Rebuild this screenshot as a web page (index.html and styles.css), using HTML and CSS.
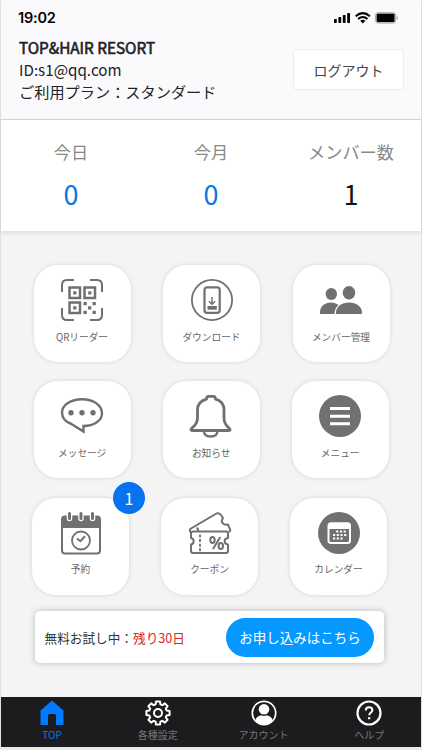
FILE: index.html
```html
<!DOCTYPE html>
<html lang="ja">
<head>
  <meta charset="UTF-8">
  <meta name="viewport" content="width=device-width, initial-scale=1.0">
  <title>TOP</title>
  <link rel="stylesheet" href="styles.css">
</head>
<body>
  <div class="app">
    <header class="header">
      <div class="status-bar">
        <span class="time">19:02</span>
        <svg class="status-icons" width="64" height="12" viewBox="0 0 64 12">
          <g fill="#000">
            <rect x="0" y="7" width="2.8" height="4" rx=".7"/>
            <rect x="4.4" y="5" width="2.8" height="6" rx=".7"/>
            <rect x="8.8" y="3" width="2.8" height="8" rx=".7"/>
            <rect x="13.2" y="1" width="2.8" height="10" rx=".7"/>
          </g>
          <g fill="none" stroke="#000" stroke-width="2.1">
            <path d="M21.7 4.2Q28.8 -2 35.9 4.2"/>
            <path d="M24.1 7Q28.8 3 33.5 7"/>
          </g>
          <path d="M26.2 8.7Q28.8 6.7 31.4 8.7L28.8 11.5z"/>
          <rect x="41.5" y=".7" width="20.2" height="10.4" rx="2.6" fill="#ccc" stroke="#aaa"/>
          <rect x="42.7" y="1.7" width="17.8" height="8.4" rx="1.3"/>
          <path d="M62.7 4v4q1.3-.6 1.3-2t-1.3-2" fill="#aaa"/>
        </svg>
      </div>
      <div class="account">
        <div class="account-info">
          <h1 class="shop-name">TOP&amp;HAIR RESORT</h1>
          <p class="shop-id">ID:s1@qq.com</p>
          <p class="plan">ご利用プラン：スタンダード</p>
        </div>
        <button class="logout">ログアウト</button>
      </div>
    </header>

    <section class="stats">
      <div class="stat">
        <span class="stat-label">今日</span>
        <span class="stat-value">0</span>
      </div>
      <div class="stat">
        <span class="stat-label">今月</span>
        <span class="stat-value">0</span>
      </div>
      <div class="stat">
        <span class="stat-label">メンバー数</span>
        <span class="stat-value dark">1</span>
      </div>
    </section>

    <main class="menu">
      <div class="menu-row row-first">
        <div class="tile">
          <svg class="icon" viewBox="0 0 42 42">
            <g fill="none" stroke="#707070" stroke-width="2">
              <path d="M1 13V6q0-5 5-5h7M29 1h7q5 0 5 5v7M41 29v7q0 5-5 5h-7M13 41H6q-5 0-5-5v-7"/>
              <path d="M8.5 8.5H19V19H8.5zM23.5 8.5H34V19H23.5zM8.5 23.5H19V34H8.5z" stroke-width="2.5"/>
            </g>
            <g fill="#707070">
              <path d="M12.200 12.200h3.200v3.200h-3.200zM27.200 12.200h3.200v3.200h-3.200zM12.200 27.200h3.200v3.200h-3.200z"/>
              <path d="M22.500 23h3.300v3.300h-3.300zM31.500 23h3.300v3.300h-3.300zM27 27.300h3.300v3.300H27zM22.500 31.700h3.300V35h-3.300zM31.500 31.700h3.300V35h-3.300z"/>
            </g>
          </svg>
          <span class="tile-label">QRリーダー</span>
        </div>
        <div class="tile">
          <svg class="icon" viewBox="0 0 42 42">
            <g fill="none" stroke="#707070">
              <circle cx="21" cy="21" r="20.100" stroke-width="1.800"/>
              <rect x="13.500" y="8.300" width="15.200" height="25.500" rx="2.500" stroke-width="2.200"/>
              <path d="M21 18v6.500M17.800 22.300l3.200 3 3.200-3" stroke-width="1.500"/>
            </g>
            <path d="M16.500 27h9.300v3.700h-9.300z" fill="#707070"/>
          </svg>
          <span class="tile-label">ダウンロード</span>
        </div>
        <div class="tile">
          <svg class="icon" viewBox="0 0 42 42" fill="#707070">
            <ellipse cx="11.300" cy="15" rx="5.700" ry="6"/>
            <path d="M0 35v-1.500C0 27 5 23.500 11 23.500c3 0 5.500 1 7.500 2.500-2.400 2-4 5-4 9z"/>
            <ellipse cx="29" cy="13.700" rx="6.300" ry="6.700"/>
            <path d="M16 35v-1.500c0-6 6-10 13-10s13 4 13 10V34q0 1-1 1z"/>
          </svg>
          <span class="tile-label">メンバー管理</span>
        </div>
      </div>

      <div class="menu-row row-second">
        <div class="tile">
          <svg class="icon" viewBox="0 0 42 42">
            <path d="M22.500 36.500v-5.500c10-.3 18.500-5 18.500-12.800C41 10 32 4.200 21 4.200S1 10 1 17.500c0 6 4.500 9.700 9.500 11.500z" fill="none" stroke="#707070" stroke-width="2.400"/>
            <g fill="#707070">
              <circle cx="10" cy="17.800" r="2.700"/>
              <circle cx="21" cy="17.800" r="2.700"/>
              <circle cx="32" cy="17.800" r="2.700"/>
            </g>
          </svg>
          <span class="tile-label">メッセージ</span>
        </div>
        <div class="tile">
          <svg class="icon" viewBox="0 0 42 42" fill="none" stroke="#707070" stroke-width="2.800" stroke-linejoin="round">
            <path d="M16.500 4.200Q16.500 1.300 18.500 1.300h5q2 0 2 2.900c5.500 1.500 8.500 5.500 8.500 10.800v8c0 5 1.500 7.300 5.200 10.200 1.500 1.300 1 2.300-.5 2.300H2.300c-1.500 0-2-1-.5-2.300C5.500 30.300 7.500 28 7.500 23v-8c0-5.300 3.500-9.300 9-10.800z"/>
            <path d="M14 36c0 3.500 2.500 5.500 6.700 5.500s6.700-2 6.700-5.500" stroke-width="2.300"/>
          </svg>
          <span class="tile-label">お知らせ</span>
        </div>
        <div class="tile">
          <svg class="icon" viewBox="0 0 42 42">
            <circle cx="21" cy="21" r="21" fill="#707070"/>
            <path d="M11 13.600h20M11 21.200h20M11 28.800h20" stroke="#fff" stroke-width="3"/>
          </svg>
          <span class="tile-label">メニュー</span>
        </div>
      </div>

      <div class="menu-row row-third">
        <div class="tile">
          <span class="badge">1</span>
          <svg class="icon" viewBox="0 0 42 42">
            <rect x="2" y="4.500" width="38" height="37" rx="3" fill="#fff" stroke="#707070" stroke-width="2"/>
            <path d="M2 16V7q0-3 3-3h32q3 0 3 3v9z" fill="#707070"/>
            <path d="M9.500 1.500v5M21 1.500v5M32.500 1.500v5" stroke="#fff" stroke-width="5.500" stroke-linecap="round"/>
            <path d="M9.500 1.500v5M21 1.500v5M32.500 1.500v5" stroke="#707070" stroke-width="3" stroke-linecap="round"/>
            <g fill="none" stroke="#707070">
              <circle cx="21" cy="28.500" r="9" stroke-width="1.800"/>
              <path d="M17 26.500l3.300 2.700 4.700-5" stroke-width="2"/>
            </g>
          </svg>
          <span class="tile-label">予約</span>
        </div>
        <div class="tile">
          <svg class="icon" viewBox="0 0 42 42">
            <g fill="none" stroke="#707070" stroke-width="2" stroke-linejoin="round">
              <path d="M4 19.500h33q2 0 2 2V26c-4.500.5-4.500 6 0 6.500V39q0 2-2 2H4q-2 0-2-2v-6.500c3.500-.5 3.500-6 0-6.500v-4.500q0-2 2-2z"/>
              <path d="M2 20.500Q-.5 18.500 2 16.500L27.500 1.500q2.500-1 4 1l2.500 3.500c-3 4 .5 7.500 5 6.500l2 5q1 2-1.500 2.300"/>
              <path d="M7.500 16q2 .5 1.500 3"/>
              <ellipse cx="23.500" cy="28" rx="2.200" ry="3"/>
              <ellipse cx="31.800" cy="34" rx="2.200" ry="3"/>
              <path d="M31.300 25L24 37"/>
            </g>
            <path d="M11 22.500v17" stroke="#707070" stroke-width="1.800" stroke-dasharray="3 1.600"/>
          </svg>
          <span class="tile-label">クーポン</span>
        </div>
        <div class="tile">
          <svg class="icon" viewBox="0 0 42 42">
            <circle cx="21" cy="21" r="21" fill="#707070"/>
            <rect x="10.500" y="11.300" width="21.500" height="19.700" rx="2.500" fill="none" stroke="#fff" stroke-width="2"/>
            <path d="M10.500 12h21.500v5H10.500z" fill="#fff"/>
            <path d="M18.200 19.500h11M15 23h14.500M15 26.500h10.500" stroke="#fff" stroke-width="2.200" stroke-dasharray="2.200 1.500"/>
          </svg>
          <span class="tile-label">カレンダー</span>
        </div>
      </div>

      <div class="trial">
        <p class="trial-text">無料お試し中：<span class="trial-days">残り30日</span></p>
        <button class="apply">お申し込みはこちら</button>
      </div>
    </main>

    <nav class="tab-bar">
      <a class="tab active">
        <svg class="tab-icon" viewBox="0 0 26 26">
          <path d="M1.500 10.500L13 .5l11.500 10V25H17v-9.500q0-1.500-1.500-1.500h-5Q9 14 9 15.500V25H1.500z" fill="#007aff"/>
        </svg>
        <span>TOP</span>
      </a>
      <a class="tab">
        <svg class="tab-icon" viewBox="0 0 26 26" fill="none" stroke="#fff" stroke-width="2" stroke-linejoin="round">
          <path d="M10.600 4.300L11 1.400h4l.4 2.900 2 .9 2.400-1.800 2.800 2.800-1.800 2.400.9 2 2.900.4v4l-2.900.4-.9 2 1.800 2.400-2.800 2.800-2.400-1.800-2 .9-.4 2.900h-4l-.4-2.900-2-.9-2.400 1.800-2.800-2.800 1.800-2.400-.9-2-2.900-.4v-4l2.900-.4.9-2-1.800-2.400 2.800-2.800 2.400 1.800z"/>
          <circle cx="13" cy="13" r="4"/>
        </svg>
        <span>各種設定</span>
      </a>
      <a class="tab">
        <svg class="tab-icon" viewBox="0 0 26 26">
          <circle cx="13" cy="13" r="11.700" fill="none" stroke="#fff" stroke-width="1.700"/>
          <circle cx="13" cy="9.200" r="5.300" fill="#fff"/>
          <path d="M4.200 20.500c.8-3.200 3-4.500 5.800-5.200q3 1.500 6 0c2.800.7 5 2 5.800 5.200Q18.500 25 13 25t-8.800-4.500z" fill="#fff"/>
        </svg>
        <span>アカウント</span>
      </a>
      <a class="tab">
        <svg class="tab-icon" viewBox="0 0 26 26" fill="none" stroke="#fff">
          <circle cx="13" cy="13" r="11.500" stroke-width="2.200"/>
          <path d="M9.800 10.400c0-2 1.300-3.200 3.300-3.200s3.300 1.200 3.300 3c0 2.300-3.200 2.500-3.200 5.100" stroke-width="2"/>
          <path d="M12 17.200h2.300v2H12z" fill="#fff" stroke="none"/>
        </svg>
        <span>ヘルプ</span>
      </a>
    </nav>
  </div>
</body>
</html>
```
FILE: styles.css
```css
* {
  box-sizing: border-box;
}

body {
  margin: 0;
  background-color: #e9e9ea;
  font-family: "Noto Sans CJK JP", sans-serif;
  color: #222;
}

h1, p {
  margin: 0;
}

button {
  font-family: inherit;
  padding: 0;
  border: none;
}

.app {
  width: 420px;
  height: 747px;
  margin: 0 1px;
  display: flex;
  flex-direction: column;
  background-color: #f4f4f4;
  box-shadow: 0 1px 2px #ccc;
}

.header {
  height: 120px;
  padding: 9px 17px 0 18px;
  background-color: #fafafd;
  border-bottom: 1px solid #d8d8d9;
}

.status-bar {
  display: flex;
  justify-content: space-between;
  height: 28px;
  padding: 0 6px 0 0;
}

.time {
  margin-left: -1px;
  font: 600 14.5px/17px Inter, sans-serif;
  letter-spacing: -0.2px;
  color: #000;
}

.status-icons {
  margin-top: 3px;
}

.account {
  display: flex;
  justify-content: space-between;
}

.account-info {
  font-size: 15.2px;
  line-height: 22px;
}

.shop-name {
  font-size: 15.3px;
  font-weight: 400;
  line-height: 21px;
  -webkit-text-stroke: 0.6px #222;
}

.logout {
  width: 111px;
  height: 41px;
  margin-top: 12px;
  border: 1px solid #ececef;
  border-radius: 3px;
  background-color: #fff;
  font-size: 14px;
  color: #444;
}

.stats {
  display: grid;
  grid-template-columns: repeat(3, 1fr);
  height: 111px;
  padding-top: 20px;
  background-color: #fff;
  box-shadow: 0 2px 5px rgba(0, 0, 0, 0.1);
}

.stat {
  display: flex;
  flex-direction: column;
  align-items: center;
}

.stat-label {
  font-size: 17.2px;
  line-height: 24px;
  color: #888;
}

.stat-value {
  margin-top: 10px;
  font-size: 27px;
  line-height: 40px;
  color: #0b76dc;
}

.stat-value.dark {
  color: #111;
}

.menu {
  flex: 1;
  padding-top: 33.5px;
}

.menu-row {
  display: flex;
  gap: 32px;
  margin-bottom: 19.5px;
}

.row-first {
  padding-left: 32.5px;
  gap: 32.5px;
}

.row-second {
  padding-left: 32.7px;
}

.row-third {
  padding-left: 31px;
  margin-bottom: 16.5px;
}

.tile {
  position: relative;
  display: flex;
  flex-direction: column;
  align-items: center;
  width: 97px;
  height: 97px;
  padding-top: 14px;
  border-radius: 24px;
  background-color: #fff;
  box-shadow: 0 0 4px rgba(0, 0, 0, 0.13);
}

.icon {
  width: 42px;
  height: 42px;
  overflow: visible;
}

.tile-label {
  margin-top: 8px;
  font-size: 9.7px;
  line-height: 16px;
  color: #666;
}

.row-second .tile-label,
.row-third .tile-label {
  margin-top: 7.5px;
}

.badge {
  position: absolute;
  top: -16px;
  right: -16px;
  width: 32px;
  height: 32px;
  border-radius: 50%;
  background-color: #0773ef;
  color: #fff;
  font-size: 16px;
  line-height: 32px;
  text-align: center;
}

.trial {
  display: flex;
  align-items: center;
  justify-content: space-between;
  width: 349px;
  height: 52px;
  margin-left: 34px;
  padding: 0 10px 0 9.5px;
  border-radius: 5px;
  background-color: #fff;
  box-shadow: 0 0 6px rgba(0, 0, 0, 0.25);
}

.trial-text {
  font-size: 12.65px;
  color: #333;
}

.trial-days {
  color: #d9262d;
}

.apply {
  width: 148px;
  height: 39px;
  border-radius: 20px;
  background-color: #0599ff;
  font-size: 13.5px;
  color: #fff;
}

.tab-bar {
  display: flex;
  height: 50px;
  background-color: #1c1c1e;
}

.tab {
  display: flex;
  flex: 0 0 105.7px;
  flex-direction: column;
  align-items: center;
  padding-top: 3px;
  font-size: 10px;
  line-height: 14px;
  color: #777;
}

.tab:first-child {
  flex-basis: 102px;
  margin-right: 2px;
}

.tab.active {
  color: #0878e8;
}

.tab-icon {
  width: 26px;
  height: 26px;
  margin-bottom: 2px;
}
```
